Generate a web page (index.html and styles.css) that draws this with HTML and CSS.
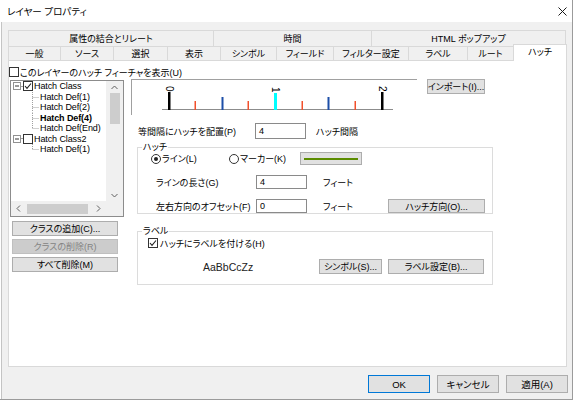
FILE: index.html
```html
<!DOCTYPE html>
<html lang="ja">
<head>
<meta charset="utf-8">
<title>レイヤー プロパティ</title>
<link rel="stylesheet" href="styles.css">
</head>
<body>
<div class="window">
  <div class="titlebar">
    <span class="title">レイヤー プロパティ</span>
    <svg class="close" width="9" height="9" viewBox="0 0 9 9"><path d="M0.5 0.5L8.5 8.5M8.5 0.5L0.5 8.5" stroke="#1a1a1a" stroke-width="1"/></svg>
  </div>
  <div class="main">
    <div class="tabrow row1">
      <div class="tab">属性の結合とリレート</div>
      <div class="tab">時間</div>
      <div class="tab">HTML ポップアップ</div>
    </div>
    <div class="tabrow row2">
      <div class="tab">一般</div>
      <div class="tab">ソース</div>
      <div class="tab">選択</div>
      <div class="tab">表示</div>
      <div class="tab">シンボル</div>
      <div class="tab">フィールド</div>
      <div class="tab">フィルター設定</div>
      <div class="tab">ラベル</div>
      <div class="tab">ルート</div>
      <div class="tab active">ハッチ</div>
    </div>
    <div class="panel">
      <div class="show-row">
        <span class="cb"></span><span class="cb-text">このレイヤーのハッチ フィーチャを表示(U)</span>
      </div>
      <div class="content">
        <div class="left">
          <div class="tree">
            <div class="tree-main">
              <div class="tree-items">
                <div class="node">
                  <svg class="exp" width="8" height="8" viewBox="0 0 8 8"><rect x="0.5" y="0.5" width="7" height="7" fill="#fff" stroke="#919191"/><path d="M2 4H6" stroke="#333"/></svg>
                  <span class="hd"></span>
                  <span class="cb checked"><svg width="8" height="8" viewBox="0 0 8 8"><path d="M1 4L3 6.3L7 1.5" fill="none" stroke="#222" stroke-width="1.1"/></svg></span>
                  <span class="lbl">Hatch Class</span>
                </div>
                <div class="node child">
                  <svg class="conn" width="8" height="10.5" viewBox="0 0 8 10.5"><path d="M0.5 0V10.5M0.5 5.5H7" stroke="#a0a0a0" stroke-dasharray="1 1"/></svg>
                  <span class="lbl">Hatch Def(1)</span>
                </div>
                <div class="node child">
                  <svg class="conn" width="8" height="10.5" viewBox="0 0 8 10.5"><path d="M0.5 0V10.5M0.5 5.5H7" stroke="#a0a0a0" stroke-dasharray="1 1"/></svg>
                  <span class="lbl">Hatch Def(2)</span>
                </div>
                <div class="node child">
                  <svg class="conn" width="8" height="10.5" viewBox="0 0 8 10.5"><path d="M0.5 0V10.5M0.5 5.5H7" stroke="#a0a0a0" stroke-dasharray="1 1"/></svg>
                  <span class="lbl bold">Hatch Def(4)</span>
                </div>
                <div class="node child">
                  <svg class="conn" width="8" height="10.5" viewBox="0 0 8 10.5"><path d="M0.5 0V5.5M0.5 5.5H7" stroke="#a0a0a0" stroke-dasharray="1 1"/></svg>
                  <span class="lbl">Hatch Def(End)</span>
                </div>
                <div class="node">
                  <svg class="exp" width="8" height="8" viewBox="0 0 8 8"><rect x="0.5" y="0.5" width="7" height="7" fill="#fff" stroke="#919191"/><path d="M2 4H6" stroke="#333"/></svg>
                  <span class="hd"></span>
                  <span class="cb"></span>
                  <span class="lbl">Hatch Class2</span>
                </div>
                <div class="node child">
                  <svg class="conn" width="8" height="10.5" viewBox="0 0 8 10.5"><path d="M0.5 0V5.5M0.5 5.5H7" stroke="#a0a0a0" stroke-dasharray="1 1"/></svg>
                  <span class="lbl">Hatch Def(1)</span>
                </div>
              </div>
              <div class="vscroll">
                <div class="sb-v"><svg width="7" height="5" viewBox="0 0 7 5"><path d="M0.5 4L3.5 1L6.5 4" fill="none" stroke="#606060"/></svg></div>
                <div class="vtrack"><div class="vthumb"></div></div>
                <div class="sb-v"><svg width="7" height="5" viewBox="0 0 7 5"><path d="M0.5 1L3.5 4L6.5 1" fill="none" stroke="#606060"/></svg></div>
              </div>
            </div>
            <div class="hscroll">
              <div class="sb-h"><svg width="5" height="7" viewBox="0 0 5 7"><path d="M4 0.5L1 3.5L4 6.5" fill="none" stroke="#606060"/></svg></div>
              <div class="htrack"><div class="hthumb"></div></div>
              <div class="sb-h"><svg width="5" height="7" viewBox="0 0 5 7"><path d="M1 0.5L4 3.5L1 6.5" fill="none" stroke="#606060"/></svg></div>
              <div class="corner"></div>
            </div>
          </div>
          <div class="left-buttons">
            <div class="btn">クラスの追加(C)...</div>
            <div class="btn disabled">クラスの削除(R)</div>
            <div class="btn">すべて削除(M)</div>
          </div>
        </div>
        <div class="right">
          <div class="preview-row">
            <div class="preview">
              <svg width="285" height="35" viewBox="0 0 285 35">
                <path d="M30 29.5H261" stroke="#8c8c8c" stroke-width="1"/>
                <rect x="36" y="12" width="2.5" height="18" fill="#000"/>
                <rect x="249" y="12" width="2.5" height="18" fill="#000"/>
                <rect x="142" y="13" width="3" height="17" fill="#00ffff"/>
                <rect x="89.5" y="17" width="2" height="13" fill="#1d4fa8"/>
                <rect x="195.5" y="17" width="2" height="13" fill="#1d4fa8"/>
                <rect x="62.5" y="21" width="1.5" height="9" fill="#f2502c"/>
                <rect x="115.5" y="21" width="1.5" height="9" fill="#f2502c"/>
                <rect x="169.5" y="21" width="1.5" height="9" fill="#f2502c"/>
                <rect x="222.5" y="21" width="1.5" height="9" fill="#f2502c"/>
                <text class="tick-lbl" transform="translate(34,6) rotate(90)">0</text>
                <text class="tick-lbl" transform="translate(140,7) rotate(90)">1</text>
                <text class="tick-lbl" transform="translate(247,6) rotate(90)">2</text>
              </svg>
            </div>
            <div class="btn import">インポート(I)...</div>
          </div>
          <div class="spacing-row">
            <span class="spacing-label">等間隔にハッチを配置(P)</span>
            <div class="input">4</div>
            <span class="unit">ハッチ間隔</span>
          </div>
          <fieldset class="group group1">
            <legend>ハッチ</legend>
            <div class="radio-row">
              <div class="radio-item r1"><span class="radio on"></span><span>ライン(L)</span></div>
              <div class="radio-item r2"><span class="radio"></span><span>マーカー(K)</span></div>
              <div class="btn line-btn"><span class="green"></span></div>
            </div>
            <div class="field-row">
              <span class="field-label">ラインの長さ(G)</span>
              <div class="input">4</div>
              <span class="unit">フィート</span>
            </div>
            <div class="field-row">
              <span class="field-label">左右方向のオフセット(F)</span>
              <div class="input">0</div>
              <span class="unit">フィート</span>
              <div class="btn dir-btn">ハッチ方向(O)...</div>
            </div>
          </fieldset>
          <fieldset class="group group2">
            <legend>ラベル</legend>
            <div class="cb-row">
              <span class="cb checked"><svg width="8" height="8" viewBox="0 0 8 8"><path d="M1 4L3 6.3L7 1.5" fill="none" stroke="#222" stroke-width="1.1"/></svg></span>
              <span class="cb-text2">ハッチにラベルを付ける(H)</span>
            </div>
            <div class="sample-row">
              <span class="sample">AaBbCcZz</span>
              <div class="btn sym-btn">シンボル(S)...</div>
              <div class="btn lbl-btn">ラベル設定(B)...</div>
            </div>
          </fieldset>
        </div>
      </div>
    </div>
    <div class="footer">
      <div class="btn default">OK</div>
      <div class="btn">キャンセル</div>
      <div class="btn">適用(A)</div>
    </div>
  </div>
</div>
</body>
</html>
```
FILE: styles.css
```css
* { box-sizing: border-box; }
html, body { margin: 0; padding: 0; }
body {
  width: 575px;
  height: 400px;
  background: #ffffff;
  font-family: "Liberation Sans", "Noto Sans CJK JP", sans-serif;
  font-size: 9px;
  color: #000;
  font-feature-settings: "palt";
  overflow: hidden;
}
.window {
  width: 573px;
  height: 400px;
  display: flex;
  flex-direction: column;
  border-right: 1px solid #9b9b9b;
  border-bottom: 1px solid #9b9b9b;
}
.titlebar {
  height: 22px;
  flex: none;
  background: #fff;
  display: flex;
  align-items: center;
  justify-content: space-between;
  padding: 0 5px 0 7px;
}
.title { font-size: 9.5px; }
.close { display: block; }
.main {
  flex: 1;
  background: #f0f0f0;
  margin-left: 1px;
  border-left: 1px solid #c4c4c4;
  padding: 8px 0 0 6px;
  display: flex;
  flex-direction: column;
}
.tabrow { display: flex; flex: none; }
.row1 { height: 16px; width: 558px; }
.row2 { height: 14px; width: 559px; align-items: flex-end; }
.tab {
  height: 100%;
  flex: none;
  border: 1px solid #d9d9d9;
  border-right: none;
  border-bottom: none;
  background: #f0f0f0;
  display: flex;
  align-items: center;
  justify-content: center;
  white-space: nowrap;
}
.tab:last-child { border-right: 1px solid #d9d9d9; }
.row1 .tab:nth-child(1) { width: 205px; }
.row1 .tab:nth-child(2) { width: 158px; }
.row1 .tab:nth-child(3) { width: 195px; }
.row2 .tab:nth-child(1) { width: 52px; }
.row2 .tab:nth-child(2) { width: 53px; }
.row2 .tab:nth-child(3) { width: 54px; }
.row2 .tab:nth-child(4) { width: 53px; }
.row2 .tab:nth-child(5) { width: 56px; }
.row2 .tab:nth-child(6) { width: 57px; }
.row2 .tab:nth-child(7) { width: 75px; }
.row2 .tab:nth-child(8) { width: 59px; }
.row2 .tab:nth-child(9) { width: 46px; }
.row2 .tab:nth-child(10) { width: 54px; }
.tab.active {
  height: 17px;
  margin-bottom: -1px;
  background: #fff;
  padding-bottom: 3px;
  position: relative;
  z-index: 1;
}
.panel {
  flex: none;
  width: 559px;
  height: 307px;
  background: #fff;
  border: 1px solid #d9d9d9;
}
.show-row {
  display: flex;
  align-items: center;
  height: 10px;
  margin-top: 6px;
}
.cb {
  width: 10px;
  height: 10px;
  flex: none;
  border: 1px solid #333;
  background: #fff;
  display: flex;
  align-items: center;
  justify-content: center;
}
.cb svg { display: block; }
.cb-text { margin-left: 1px; white-space: nowrap; }
.content {
  display: flex;
  margin-top: 2px;
}
.left {
  width: 114px;
  margin-left: 1px;
  padding-top: 1px;
  flex: none;
}
.tree {
  width: 114px;
  height: 137px;
  border: 1px solid #8c8c8c;
  display: flex;
  flex-direction: column;
}
.tree-main { display: flex; height: 120px; }
.tree-items {
  width: 95px;
  font-size: 9px;
  letter-spacing: -0.1px;
  overflow: hidden;
}
.node {
  height: 10.5px;
  display: flex;
  align-items: center;
  white-space: nowrap;
}
.exp { margin-left: 2px; display: block; flex: none; }
.hd { width: 2px; border-top: 1px dotted #a0a0a0; flex: none; }
.node .lbl { margin-left: 1px; }
.node.child { padding-left: 21px; align-items: stretch; }
.node.child .lbl { margin-left: 0; display: flex; align-items: center; }
.conn { display: block; flex: none; }
.bold { font-weight: bold; }
.vscroll {
  width: 17px;
  background: #f0f0f0;
  display: flex;
  flex-direction: column;
}
.sb-v { height: 12px; display: flex; align-items: center; justify-content: center; flex: none; }
.sb-v svg, .sb-h svg { display: block; }
.vtrack { flex: 1; }
.vthumb { width: 10px; height: 31px; margin: 0 auto; background: #cdcdcd; }
.hscroll {
  height: 15px;
  display: flex;
  background: #f0f0f0;
}
.sb-h { width: 15px; display: flex; align-items: center; justify-content: center; flex: none; }
.htrack { width: 65px; display: flex; align-items: center; }
.hthumb { width: 61px; height: 10px; margin-left: 1px; background: #cdcdcd; }
.corner { width: 17px; background: #f0f0f0; }
.btn {
  background: #e1e1e1;
  border: 1px solid #adadad;
  display: flex;
  align-items: center;
  justify-content: center;
  flex: none;
  white-space: nowrap;
}
.btn.disabled { background: #cccccc; border-color: #bfbfbf; color: #838383; }
.left-buttons {
  display: flex;
  flex-direction: column;
  gap: 3px;
  margin: 4px 0 0 2px;
}
.left-buttons .btn { width: 106px; height: 15px; }
.right {
  margin-left: 7px;
  width: 362px;
  display: flex;
  flex-direction: column;
}
.preview-row { display: flex; align-items: flex-start; }
.preview {
  width: 286px;
  height: 36px;
  border-top: 1px solid #a0a0a0;
  border-left: 1px solid #a0a0a0;
}
.preview svg { display: block; }
.tick-lbl { font-family: "Liberation Sans", sans-serif; font-size: 10px; fill: #000; }
.import { width: 58px; height: 15px; margin-left: 10px; }
.spacing-row {
  display: flex;
  align-items: center;
  height: 16px;
  margin-top: 8px;
}
.spacing-label { width: 117px; margin-left: 7px; white-space: nowrap; }
.input {
  width: 51px;
  height: 16px;
  border: 1px solid #8a8a8a;
  background: #fff;
  padding-left: 3px;
  display: flex;
  align-items: center;
  flex: none;
}
.unit { margin-left: 10px; white-space: nowrap; }
fieldset.group {
  margin: 3px 0 0 6px;
  padding: 0;
  border: 1px solid #dcdcdc;
  width: 356px;
  min-width: 0;
}
fieldset.group legend {
  padding: 0 1px;
  margin-left: 4px;
  line-height: 10px;
  height: 10px;
}
.group1 { padding-bottom: 4px; }
fieldset.group2 { margin-top: 12px; padding-bottom: 10px; }
.radio-row {
  display: flex;
  align-items: center;
  height: 13px;
  margin-left: 13px;
}
.radio-item { display: flex; align-items: center; white-space: nowrap; }
.radio-item.r1 { width: 78px; }
.radio-item.r2 { width: 71px; }
.radio {
  width: 10px;
  height: 10px;
  border: 1px solid #333;
  border-radius: 50%;
  background: #fff;
  display: flex;
  align-items: center;
  justify-content: center;
  margin-right: 1px;
  flex: none;
}
.radio.on::after {
  content: "";
  width: 4px;
  height: 4px;
  border-radius: 50%;
  background: #222;
}
.line-btn { width: 62px; height: 13px; padding: 0 3px; }
.green { flex: 1; height: 2px; background: #5b8c00; }
.field-row {
  display: flex;
  align-items: center;
  height: 14px;
  margin-top: 10px;
}
.field-label { width: 100px; margin-left: 18px; white-space: nowrap; }
.field-row .input { height: 14px; }
.field-row .unit { margin-left: 16px; }
.dir-btn { width: 97px; height: 14px; margin-left: auto; margin-right: 7px; }
.cb-row {
  display: flex;
  align-items: center;
  height: 10px;
  margin: 2px 0 0 10px;
}
.cb-text2 { margin-left: 2px; white-space: nowrap; }
.sample-row {
  display: flex;
  align-items: center;
  height: 15px;
  margin-top: 11px;
}
.sample { margin-left: 65px; width: 116px; font-size: 10.5px; color: #222; }
.sym-btn { width: 63px; height: 15px; }
.lbl-btn { width: 96px; height: 15px; margin-left: 6px; }
.footer {
  display: flex;
  justify-content: flex-end;
  gap: 7px;
  margin-top: 8px;
  padding-right: 4px;
}
.footer .btn { width: 62px; height: 18px; font-size: 9.5px; }
.btn.default { border-color: #0078d7; }
```
